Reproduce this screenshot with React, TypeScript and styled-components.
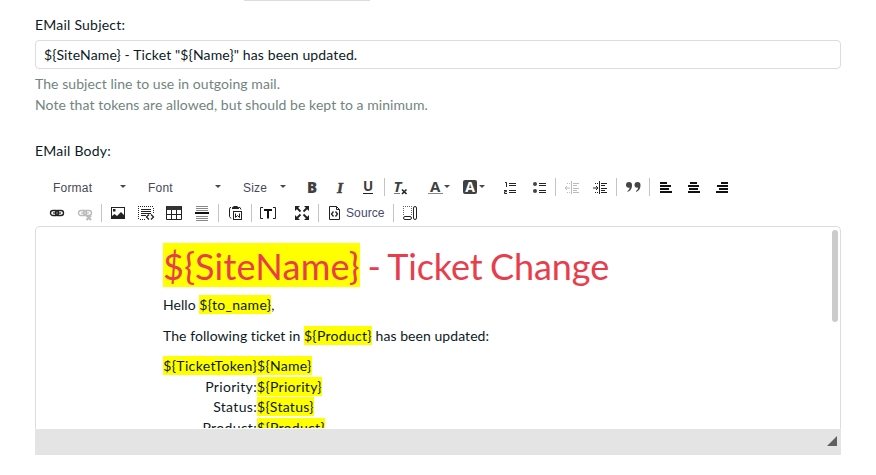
import React from "react";
import styled, { createGlobalStyle, css } from "styled-components";

const Global = createGlobalStyle`
  * { box-sizing: border-box; }
  body { margin: 0; background: #fff; overflow: hidden; }
`;

const Page = styled.main`
  width: 876px;
  height: 475px;
  overflow: hidden;
  padding: 0 35px;
  color: #0d1a26;
  font: 14px/21px Lato, sans-serif;
  font-variant-ligatures: none;
  letter-spacing: 0.06px;
`;

const TabEdge = styled.div`
  width: 126px;
  height: 1px;
  margin-left: 209px;
  background: #dcdcdc;
`;

const Label = styled.label<{ $top: number }>`
  display: block;
  width: max-content;
  margin-top: ${(p) => p.$top}px;
  letter-spacing: 0.22px;
`;

const SubjectInput = styled.input`
  display: block;
  width: 806px;
  height: 29px;
  margin-top: 5px;
  padding: 0 8px;
  border: 1px solid #dcdcdc;
  border-radius: 4px;
  outline: none;
  background: #fff;
  color: #0d1a26;
  font: 14px/21px Lato, sans-serif;
  font-variant-ligatures: none;
  letter-spacing: 0.13px;
`;

const Hint = styled.p`
  margin: 4px 0 0;
  color: #728480;
`;

const Toolbar = styled.div`
  margin-top: 13px;
  padding-left: 8px;
`;

const ToolRow = styled.div`
  display: flex;
  height: 26px;
  align-items: center;
`;

const ToolButton = styled.button<{ $w?: number; $ml?: number; $faded?: boolean }>`
  display: flex;
  flex: none;
  align-items: center;
  width: ${(p) => p.$w ?? 28}px;
  height: 26px;
  margin: 0 0 0 ${(p) => p.$ml ?? 0}px;
  padding: 0 0 0 6px;
  border: 0;
  background: none;
  color: #484848;
  font: 12px/16px "Liberation Sans", Arial, sans-serif;
  opacity: ${(p) => (p.$faded ? 0.3 : 1)};
  svg { display: block; flex: none; overflow: visible; }
`;

const SourceText = styled.span`
  margin-left: 4px;
  color: #484870;
  letter-spacing: 0.1px;
`;

const Combo = styled.button<{ $w: number }>`
  display: flex;
  flex: none;
  align-items: center;
  justify-content: space-between;
  width: ${(p) => p.$w}px;
  height: 26px;
  padding: 2px 12px 0 10px;
  border: 0;
  background: none;
  color: #484858;
  font: 12px/16px "Liberation Sans", Arial, sans-serif;
  letter-spacing: 0.2px;
`;

const caret = css`
  width: 0;
  height: 0;
  border: 3px solid transparent;
  border-top-color: #484848;
  border-bottom: 0;
`;
const Caret = styled.i<{ $gap?: boolean }>`
  ${caret}
  margin-left: ${(p) => (p.$gap ? 1 : 0)}px;
  margin-top: ${(p) => (p.$gap ? -1 : -3)}px;
`;

const Separator = styled.span<{ $l: number; $r: number }>`
  flex: none;
  width: 1px;
  height: 18px;
  margin: 0 ${(p) => p.$r}px 0 ${(p) => p.$l}px;
  background: #c4c4c4;
`;

const Editor = styled.section`
  display: flex;
  width: 806px;
  height: 203px;
  border: 1px solid #dcdcdc;
  border-bottom-color: #fff;
  border-radius: 5px 5px 0 0;
  overflow: hidden;
`;

const Message = styled.article`
  flex: 1;
  padding: 16px 0 0 127px;
`;

const Token = styled.mark`
  padding: 1px 0;
  background: #ff0;
  color: inherit;
  letter-spacing: 0.3px;
`;

const Title = styled.h1`
  height: 44px;
  margin: 0;
  color: #e83e4c;
  font-size: 36px;
  font-weight: 400;
  line-height: 46px;
  letter-spacing: -0.1px;
  word-spacing: -1.6px;
  white-space: nowrap;
  ${Token} {
    display: inline-block;
    height: 44px;
    padding: 0;
    letter-spacing: 0.27px;
  }
`;

const Paragraph = styled.p<{ $top: number }>`
  margin: ${(p) => p.$top}px 0 0;
`;

const Details = styled.div`
  display: grid;
  grid-template-columns: 94px max-content;
  grid-auto-rows: 20.6px;
  margin-top: 10px;
  line-height: 20.6px;
`;

const Name = styled.span`
  text-align: right;
  white-space: nowrap;
  letter-spacing: 0.33px;
  ${Token} { letter-spacing: 0.36px; }
`;

const ScrollTrack = styled.div`
  width: 8px;
  padding-top: 3px;
`;
const ScrollThumb = styled.div`
  width: 6px;
  height: 92px;
  border-radius: 3px;
  background: #cbcbcb;
`;

const StatusBar = styled.footer`
  display: flex;
  justify-content: flex-end;
  width: 806px;
  height: 26px;
  padding: 7px 4px;
  background: #e4e4e4;
`;

const ResizeGrip = styled.span`
  width: 10px;
  height: 10px;
  background: #606060;
  clip-path: polygon(100% 0, 100% 100%, 0 100%);
`;

const Svg = ({ children }: { children: React.ReactNode }) => (
  <svg width="16" height="16" viewBox="0 0 16 16" fill="none" stroke="#222">
    {children}
  </svg>
);

const letter = {
  fontFamily: "Open Sans",
  fontWeight: 700,
  fill: "#404040",
  stroke: "none",
} as const;

const Bold = () => <Svg><text x="3" y="13.5" fontSize="15" {...letter} fontWeight={800}>B</text></Svg>;
const Italic = () => <Svg><text x="5" y="13.5" fontSize="15.5" {...letter} fontFamily="Liberation Serif" fontStyle="italic" stroke="#404040" strokeWidth=".5">I</text></Svg>;
const Underline = () => <Svg><text x="3" y="12" fontSize="13.5" {...letter}>U</text><path d="M3 14.5h10" /></Svg>;
const RemoveFormat = () => <Svg><text x="1.5" y="13" fontSize="15" {...letter} fontStyle="italic">T</text><path d="M2 14.5h6" stroke="#777" /><path d="m10 10.500 4.500 4.500m0-4.500-4.500 4.500" strokeWidth="1.6" /></Svg>;
const TextColor = () => <Svg><text x="3" y="12.5" fontSize="15" {...letter}>A</text><path d="M1 14.5h15" stroke="#888" /></Svg>;
const BackColor = () => <Svg><rect x="1" y="1" width="14" height="14" rx="2" fill="#404040" stroke="none" /><text x="3.2" y="12.8" fontSize="14" {...letter} fill="#fff">A</text></Svg>;
const Numbered = () => <Svg><path d="M2 3.5h1.5V8M1 11.5h2.5v1.2H1.5v1.8H4M6 4.5h7M6 6.5h7M6 11.5h7M6 13.5h7" /></Svg>;
const Bulleted = () => <Svg><g fill="#444" stroke="none"><circle cx="4" cy="5" r="2" /><circle cx="4" cy="12" r="2" /></g><path d="M8 4.5h7M8 6.5h7M8 11.5h7M8 13.5h7" /></Svg>;
const Dent = ({ out = false }: { out?: boolean }) => <Svg>
  <path d="M7.5 2v13M9 4.5h6M9 6.5h4M9 9.5h6M9 11.5h4M9 13.5h6" />
  <path d="M3 4.5h1m1 0h1M3 13.5h1m1 0h1" />
  <path d={out ? "M1 9h5M3 7 1 9l2 2" : "M1 9h5M4 7l2 2-2 2"} />
</Svg>;
const Quote = () => <Svg><g fill="#444" stroke="none"><path d="M1 6a3 3 0 1 1 6 0c0 4-2 6-4.5 7v-1C4 11 4.5 10 4.5 8.5 2.5 9 1 8 1 6Z" /><path d="M9.5 6a3 3 0 1 1 6 0c0 4-2 6-4.5 7v-1c1.500-1 2-2 2-3.500C11 9 9.500 8 9.500 6Z" /></g></Svg>;
const Align = ({ kind }: { kind: "left" | "center" | "right" }) => {
  const widths = [7, 11, 9, 12];
  return <Svg><g fill="#111" stroke="none">{widths.map((w, i) => {
    const x = kind === "left" ? 2 : kind === "right" ? 14 - w : Math.floor((16 - w) / 2);
    return <rect key={i} x={x} y={3 + i * 3} width={w} height="2" />;
  })}</g></Svg>;
};
const Link = ({ off = false }: { off?: boolean }) => <Svg>
  <rect x="1.500" y="5.500" width="8" height="5" rx="2.500" strokeWidth="1.400" />
  <rect x="6.500" y="5.500" width="8" height="5" rx="2.500" strokeWidth="1.400" />
  <path d="M4 8h8" strokeWidth="1.200" />
  {off && <path d="m9.500 10.500 4.500 4.500m0-4.500-4.500 4.500" strokeWidth="2" />}
</Svg>;
const Picture = () => <Svg><rect x="1.500" y="2.500" width="13" height="11" /><rect x="3" y="4" width="2.500" height="2.500" fill="#222" stroke="none" /><path d="M2 13v-2l2.500-2 2.500 2 4-4 3 3v3Z" fill="#222" stroke="none" /></Svg>;
const Templates = () => <Svg><path d="M0 1.500h16M.5 3v12M15.500 3v6M2 14.500h6" strokeDasharray="1 1" /><path d="M3 4.500h10M3 6.500h10M3 8.500h10M3 10.500h5" strokeWidth="1.200" /><path d="m11 9.500-2.500 2.500 2.500 2.500m2-5 2.500 2.500-2.500 2.500" strokeWidth="1.300" /></Svg>;
const Table = () => <Svg><path d="M0 1h16v4H0Z" fill="#333" stroke="none" /><path d="M.5 2v12.500h15V2M5.500 5v9M10.500 5v9M1 9.500h14" /></Svg>;
const PageBreak = () => <Svg><path d="M2 1.500h12M2 3.500h12M2 5.500h12M2 11.500h12M2 13.500h12M2 15.500h12" stroke="#888" /><path d="M1 8h14" stroke="#111" strokeWidth="2" /></Svg>;
const PasteWord = () => <Svg><path d="M3 2.500H2L1.500 4v7.500L3 13.500M11 2.500h1l1 2" /><path d="M4 4V2.500L6 1h3l2 1.500V4Z" fill="#222" stroke="none" /><rect x="5.500" y="6.500" width="8" height="8" /><path d="M7.500 8.500v4l2-2 2 2v-4" /></Svg>;
const Placeholder = () => <Svg><path d="M3 2.500H.5v11H3M13 2.500h2.500v11H13" /><path d="M4 5h8M8 5v8.500" stroke="#111" strokeWidth="2" /></Svg>;
const Maximize = () => <Svg><path d="M1 1h5L1 6ZM15 1v5l-5-5ZM1 15v-5l5 5ZM15 15h-5l5-5Z" fill="#222" stroke="none" /><path d="m3 3 3.500 3.500M13 3 9.500 6.500M3 13l3.500-3.500M13 13 9.500 9.500" strokeWidth="1.800" /></Svg>;
const Source = () => <Svg><path d="M3.500 1.500h7l3 3v10h-10Z" /><path d="M10.500 1.500v3h3" /><path d="m7.500 6.500-2 2.500 2 2.500m2-5 2 2.500-2 2.500" strokeWidth="1.300" /></Svg>;
const Blocks = () => <Svg><path d="M1 1.500h9M1.500 3v7M9.500 3v7" strokeDasharray="1 1" stroke="#666" /><rect x="1.500" y="11.500" width="8" height="3" rx="1.500" /><rect x="11.500" y="1.500" width="3" height="13" rx="1.500" /></Svg>;

const rows = [
  ["Priority:", "${Priority}"],
  ["Status:", "${Status}"],
  ["Product:", "${Product}"],
];

export default function App() {
  return (
    <Page>
      <Global />
      <TabEdge />
      <Label $top={13} htmlFor="subject">EMail Subject:</Label>
      <SubjectInput id="subject" defaultValue={'${SiteName} - Ticket "${Name}" has been updated.'} />
      <Hint>The subject line to use in outgoing mail.<br />Note that tokens are allowed, but should be kept to a minimum.</Hint>
      <Label $top={25}>EMail Body:</Label>
      <Toolbar>
        <ToolRow>
          <Combo $w={95}>Format<Caret /></Combo>
          <Combo $w={95}>Font<Caret /></Combo>
          <Combo $w={65}>Size<Caret /></Combo>
          <ToolButton><Bold /></ToolButton>
          <ToolButton><Italic /></ToolButton>
          <ToolButton><Underline /></ToolButton>
          <Separator $l={2} $r={1} />
          <ToolButton><RemoveFormat /></ToolButton>
          <ToolButton $ml={7} $w={35}><TextColor /><Caret $gap /></ToolButton>
          <ToolButton $w={35}><BackColor /><Caret $gap /></ToolButton>
          <ToolButton $ml={6}><Numbered /></ToolButton>
          <ToolButton><Bulleted /></ToolButton>
          <Separator $l={2} $r={2} />
          <ToolButton $faded><Dent out /></ToolButton>
          <ToolButton><Dent /></ToolButton>
          <Separator $l={2} $r={2} />
          <ToolButton><Quote /></ToolButton>
          <Separator $l={2} $r={2} />
          <ToolButton><Align kind="left" /></ToolButton>
          <ToolButton><Align kind="center" /></ToolButton>
          <ToolButton><Align kind="right" /></ToolButton>
        </ToolRow>
        <ToolRow>
          <ToolButton><Link /></ToolButton>
          <ToolButton $faded><Link off /></ToolButton>
          <Separator $l={2} $r={2} />
          <ToolButton><Picture /></ToolButton>
          <ToolButton><Templates /></ToolButton>
          <ToolButton><Table /></ToolButton>
          <ToolButton><PageBreak /></ToolButton>
          <Separator $l={2} $r={3} />
          <ToolButton><PasteWord /></ToolButton>
          <Separator $l={1} $r={2} />
          <ToolButton><Placeholder /></ToolButton>
          <ToolButton $ml={6}><Maximize /></ToolButton>
          <Separator $l={2} $r={1} />
          <ToolButton $w={71}><Source /><SourceText>Source</SourceText></ToolButton>
          <Separator $l={2} $r={2} />
          <ToolButton><Blocks /></ToolButton>
        </ToolRow>
      </Toolbar>
      <Editor>
        <Message>
          <Title><Token>{"${SiteName}"}</Token> - Ticket Change</Title>
          <Paragraph $top={7}>Hello <Token>{"${to_name}"}</Token>,</Paragraph>
          <Paragraph $top={10}>The following ticket in <Token>{"${Product}"}</Token> has been updated:</Paragraph>
          <Details>
            <Name><Token>{"${TicketToken}"}</Token></Name>
            <span><Token>{"${Name}"}</Token></span>
            {rows.map(([name, value]) => (
              <React.Fragment key={name}>
                <Name>{name}</Name>
                <span><Token>{value}</Token></span>
              </React.Fragment>
            ))}
          </Details>
        </Message>
        <ScrollTrack><ScrollThumb /></ScrollTrack>
      </Editor>
      <StatusBar><ResizeGrip /></StatusBar>
    </Page>
  );
}
